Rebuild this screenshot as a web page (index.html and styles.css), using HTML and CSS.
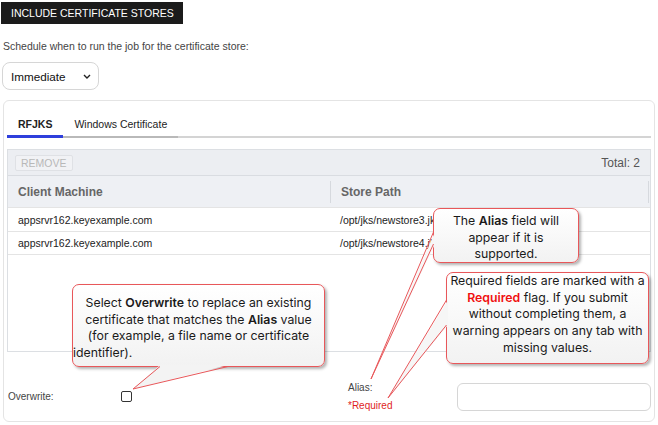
FILE: index.html
```html
<!DOCTYPE html>
<html lang="en">
  <head>
    <meta charset="UTF-8" />
    <meta name="viewport" content="width=device-width, initial-scale=1.0" />
    <title>Include Certificate Stores</title>
    <link rel="stylesheet" href="styles.css">
  </head>
  <body>
    <div class="page">
      <div class="include-btn">INCLUDE CERTIFICATE STORES</div>
      <p class="schedule-label">Schedule when to run the job for the certificate store:</p>

      <div class="select">
        <span>Immediate</span>
        <svg class="chevron" width="8" height="5" viewBox="0 0 8 5">
          <path d="M1 1 L4 4 L7 1" fill="none" stroke="#222" stroke-width="1.4" />
        </svg>
      </div>

      <div class="panel">
        <div class="tabs">
          <div class="tab active">RFJKS</div>
          <div class="tab">Windows Certificate</div>
        </div>

        <div class="grid">
          <div class="grid-toolbar">
            <button class="btn-remove" disabled>REMOVE</button>
            <span class="total">Total: 2</span>
          </div>
          <div class="grid-head">
            <div class="col col-machine">Client Machine</div>
            <div class="col col-path">Store Path</div>
          </div>
          <div class="grid-row">
            <div class="col col-machine">appsrvr162.keyexample.com</div>
            <div class="col col-path">/opt/jks/newstore3.jks</div>
          </div>
          <div class="grid-row">
            <div class="col col-machine">appsrvr162.keyexample.com</div>
            <div class="col col-path">/opt/jks/newstore4.jks</div>
          </div>
        </div>

        <div class="fields">
          <div class="field field-overwrite">
            <label class="field-label" for="overwrite">Overwrite:</label>
            <input type="checkbox" id="overwrite" class="checkbox" />
          </div>
          <div class="field field-alias">
            <div class="field-label alias-label">
              <label for="alias">Alias:</label>
              <span class="required">*Required</span>
            </div>
            <input type="text" id="alias" class="text-input" />
          </div>
        </div>
      </div>

      <!-- help callouts -->
      <div class="callout callout-alias">
        The <b>Alias</b> field will<br />appear if it is<br />supported.
      </div>
      <div class="callout callout-required">
        Required fields are marked with a<br />
        <b class="red">Required</b> flag. If you submit<br />
        without completing them, a<br />
        warning appears on any tab with<br />
        missing values.
      </div>
      <div class="callout callout-overwrite">
        Select <b>Overwrite</b> to replace an existing<br />
        certificate that matches the <b>Alias</b> value<br />
        (for example, a file name or certificate
        <span class="last-line">identifier).</span>
      </div>

      <svg class="pointers" width="658" height="425" viewBox="0 0 658 425">
        <polygon points="435,232 371,379 435,244" fill="#f7f7f7" />
        <polyline points="433.5,232 371,379 433.5,244" fill="none" stroke="#e8575a" stroke-width="1" />

        <polygon points="448,300 388,398 448,325" fill="#f6f6f6" />
        <polyline points="446.5,300 388,398 446.5,325" fill="none" stroke="#e8575a" stroke-width="1" />

        <polygon points="160,365 133,389 228,365" fill="#f3f3f3" />
        <polyline points="160,366.5 133,389 228,366.5" fill="none" stroke="#e8575a" stroke-width="1" />
      </svg>
    </div>
  </body>
</html>
```

FILE: styles.css
```css
* {
  box-sizing: border-box;
}
body {
  margin: 0;
  font-family: "Liberation Sans", Arial, sans-serif;
  color: #222;
  background: #fff;
}
.page {
  position: relative;
  width: 658px;
  height: 425px;
  padding-top: 2px;
}
.include-btn {
  display: inline-block;
  margin-left: 1px;
  height: 22px;
  line-height: 22px;
  padding: 0 9px 0 10px;
  background: #1b1b1b;
  color: #fff;
  font-size: 10.5px;
}
.schedule-label {
  margin: 16px 0 0 3px;
  font-size: 10.5px;
  line-height: 13px;
  color: #444;
}
.select {
  display: flex;
  align-items: center;
  justify-content: space-between;
  margin: 9px 0 0 2px;
  width: 97px;
  height: 28px;
  padding: 0 7px 0 8px;
  border: 1px solid #d6d6d6;
  border-radius: 8px;
  font-size: 11.7px;
  color: #111;
}
.panel {
  margin: 10px 3px 0;
  height: 322px;
  padding: 0 3px;
  border: 1px solid #e4e4e4;
  border-radius: 6px;
}
.tabs {
  display: flex;
  align-items: flex-start;
  height: 37px;
  border-bottom: 2px solid #d4d4d4;
}
.tab {
  height: 37px;
  padding: 17px 11px 0;
  font-size: 10.5px;
  line-height: 13px;
  color: #222;
  border-bottom: 2px solid #b9b9b9;
}
.tab.active {
  font-weight: bold;
  border-bottom: 3px solid #2f3fdc;
}
.grid {
  margin-top: 11px;
  height: 203px;
  border: 1px solid #dcdfe3;
}
.grid-toolbar {
  display: flex;
  align-items: center;
  justify-content: space-between;
  height: 25px;
  padding: 0 10px 0 7px;
  background: #eceef2;
}
.btn-remove {
  height: 16px;
  padding: 0 5px;
  border: 1px solid #dfe1e5;
  border-radius: 2px;
  background: #f1f2f5;
  color: #b8b8b8;
  font-family: inherit;
  font-size: 10.5px;
  line-height: 14px;
}
.total {
  font-size: 12px;
  color: #555;
}
.grid-head,
.grid-row {
  display: flex;
  align-items: center;
}
.grid-head {
  height: 32px;
  border-top: 1px solid #d9dce1;
  background: #eef0f4;
  font-size: 12px;
  font-weight: bold;
  color: #666;
}
.grid-row {
  height: 24px;
  border-top: 1px solid #e4e4e4;
  font-size: 10.5px;
  color: #222;
}
.grid-row:last-child {
  border-bottom: 1px solid #e4e4e4;
}
.col {
  padding-left: 10px;
}
.col-machine {
  width: 322px;
}
.col-path {
  flex: 1;
}
.grid-head .col-path {
  height: 22px;
  line-height: 22px;
  border-left: 1px solid #d6d9de;
  border-right: 1px solid #d6d9de;
  margin-right: 1px;
}
.fields {
  display: flex;
  align-items: center;
  margin-top: 29px;
  padding-left: 1px;
  font-size: 10px;
  color: #444;
}
.field {
  display: flex;
  align-items: center;
}
.field-overwrite {
  width: 340px;
}
.field-overwrite .field-label {
  width: 113px;
}
.checkbox {
  appearance: none;
  margin: 0;
  width: 11px;
  height: 11px;
  border: 1.5px solid #333;
  border-radius: 2px;
  background: #fff;
}
.field-alias {
  flex: 1;
}
.alias-label {
  display: flex;
  flex-direction: column;
  gap: 5px;
  width: 109px;
  line-height: 13px;
}
.required {
  color: #e01e1e;
}
.text-input {
  flex: 1;
  height: 28px;
  border: 1px solid #d6d6d6;
  border-radius: 6px;
  font: inherit;
}

/* help callouts */
.callout {
  position: absolute;
  border: 1px solid #e8575a;
  border-radius: 7px;
  background: linear-gradient(#ffffff, #f2f2f2);
  box-shadow: 2px 2px 3px rgba(0, 0, 0, 0.3);
  font-family: Inter, "Open Sans", sans-serif;
  font-size: 12.3px;
  line-height: 16.7px;
  color: #1a1a1a;
  text-align: center;
}
.callout b {
  font-weight: 600;
}
.callout .red {
  color: #f01010;
}
.callout-alias {
  left: 433px;
  top: 208px;
  width: 146px;
  height: 55px;
  padding-top: 4px;
}
.callout-required {
  left: 446px;
  top: 272px;
  width: 203px;
  height: 92px;
  padding-top: 0;
}
.callout-overwrite {
  left: 72px;
  top: 284px;
  width: 253px;
  height: 83px;
  padding-top: 10px;
}
.last-line {
  display: block;
  text-align: left;
}
.pointers {
  position: absolute;
  top: 0;
  left: 0;
  pointer-events: none;
}
```
